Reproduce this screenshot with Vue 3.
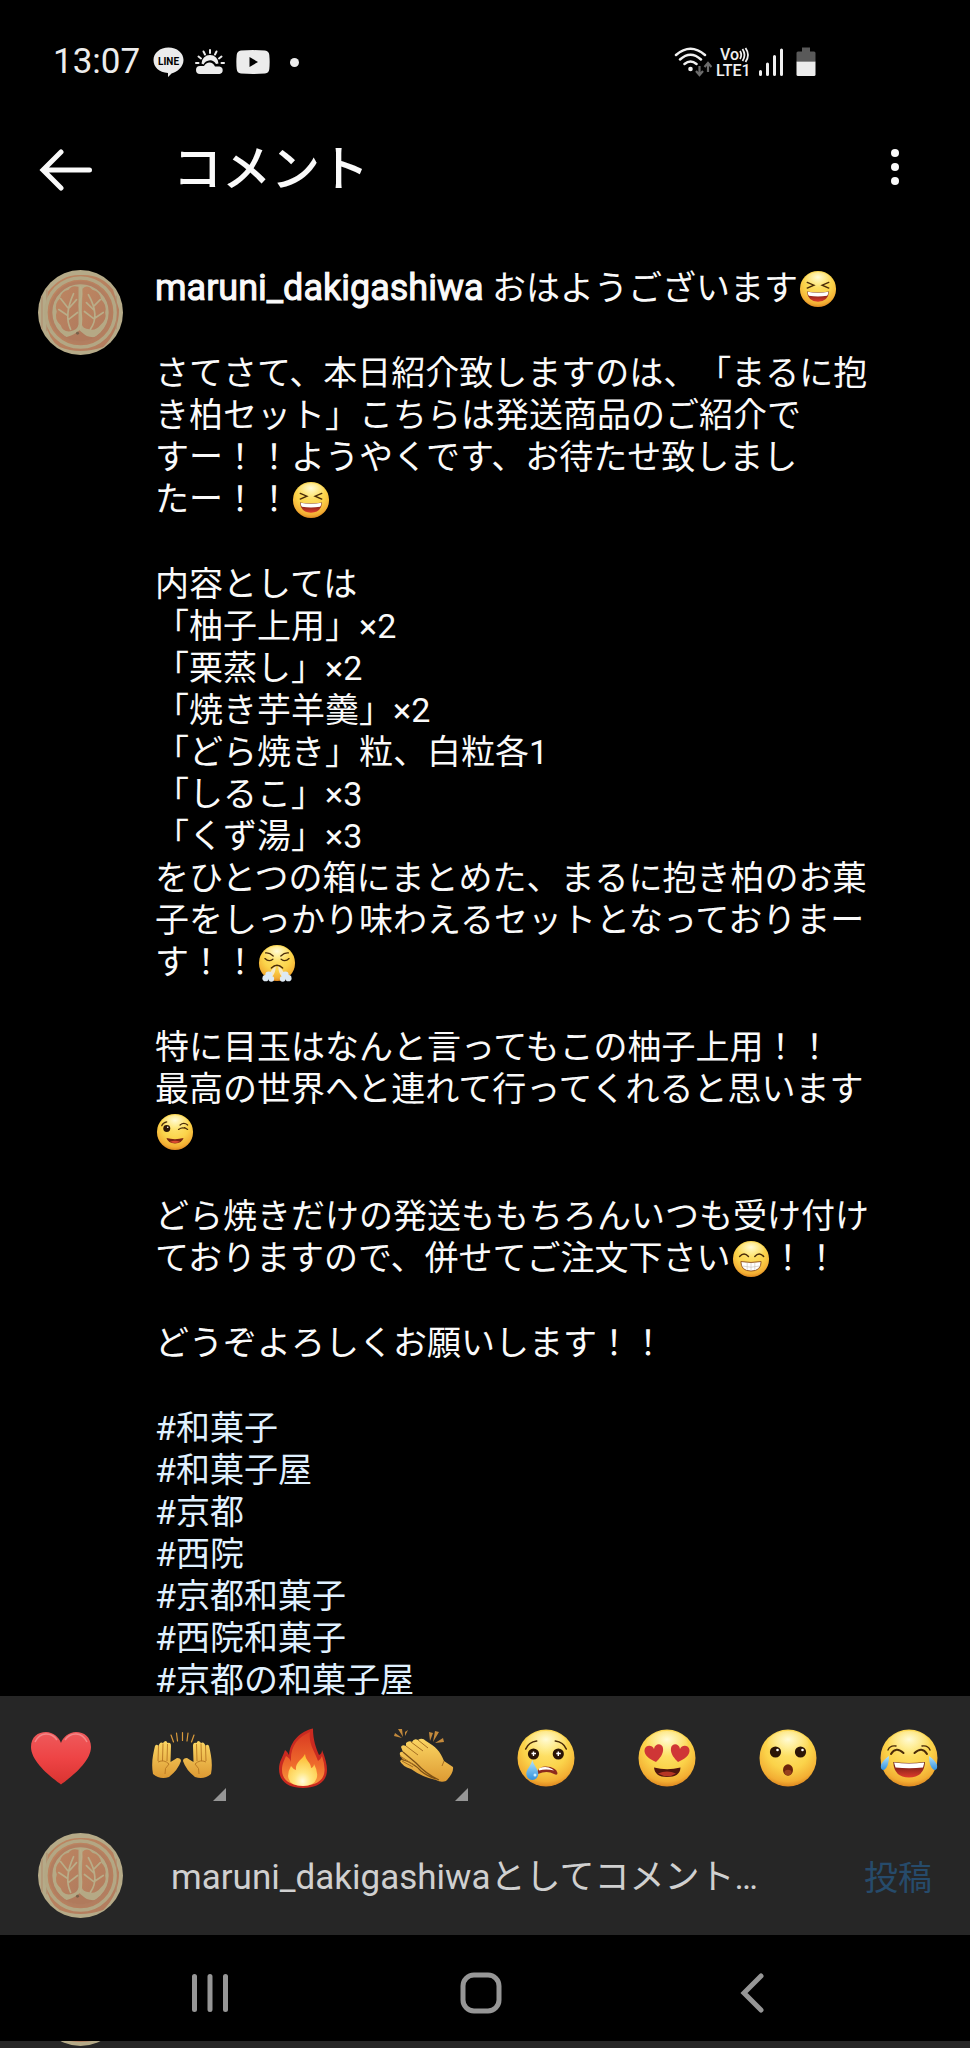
<script setup>
import { ref } from 'vue';

const user = 'maruni_dakigashiwa';
const comment = ref('');

const emojiIds = {
    '😆': 'laugh',
    '😤': 'triumph',
    '😉': 'wink',
    '😁': 'grin',
};

// each paragraph is a list of lines
const paragraphs = [
    ['さてさて、本日紹介致しますのは、「まるに抱き柏セット」こちらは発送商品のご紹介ですー！！ようやくです、お待たせ致しましたー！！😆'],
    [
        '内容としては',
        '「柚子上用」×2',
        '「栗蒸し」×2',
        '「焼き芋羊羹」×2',
        '「どら焼き」粒、白粒各1',
        '「しるこ」×3',
        '「くず湯」×3',
        'をひとつの箱にまとめた、まるに抱き柏のお菓子をしっかり味わえるセットとなっておりまーす！！😤',
    ],
    [
        '特に目玉はなんと言ってもこの柚子上用！！',
        '最高の世界へと連れて行ってくれると思います😉',
    ],
    ['どら焼きだけの発送ももちろんいつも受け付けておりますので、併せてご注文下さい😁！！'],
    ['どうぞよろしくお願いします！！'],
];

const hashtags = ['#和菓子', '#和菓子屋', '#京都', '#西院', '#京都和菓子', '#西院和菓子', '#京都の和菓子屋'];

const reactions = [
    { id: 'heart', char: '❤️' },
    { id: 'hands', char: '🙌', more: true },
    { id: 'fire', char: '🔥' },
    { id: 'clap', char: '👏', more: true },
    { id: 'cry', char: '😢' },
    { id: 'love', char: '😍' },
    { id: 'wow', char: '😮' },
    { id: 'joy', char: '😂' },
];

// split a line into text and emoji pieces
const pieces = (line) => line.split(/(😆|😤|😉|😁)/u).filter(Boolean);

const addEmoji = (char) => {
    comment.value += char;
};
</script>

<template>
    <!-- shared drawings -->
    <svg class="sprite" aria-hidden="true">
        <defs>
            <radialGradient id="g-face" cx="0.5" cy="0.3" r="0.72">
                <stop offset="0" stop-color="#ffe777" />
                <stop offset="0.55" stop-color="#fbd34a" />
                <stop offset="0.85" stop-color="#f3ae33" />
                <stop offset="1" stop-color="#d97f1c" />
            </radialGradient>
            <radialGradient id="g-shine" cx="0.5" cy="0.3" r="0.6">
                <stop offset="0" stop-color="#fffbd8" />
                <stop offset="1" stop-color="#fff3a0" stop-opacity="0" />
            </radialGradient>
            <linearGradient id="g-heart" x1="0" y1="0" x2="0" y2="1">
                <stop offset="0" stop-color="#ee5a5c" />
                <stop offset="0.5" stop-color="#ee4445" />
                <stop offset="1" stop-color="#d93330" />
            </linearGradient>
            <linearGradient id="g-tear" x1="0" y1="0" x2="0" y2="1">
                <stop offset="0" stop-color="#b6e6fb" />
                <stop offset="1" stop-color="#3191de" />
            </linearGradient>
            <linearGradient id="g-hand" x1="0" y1="0" x2="0" y2="1">
                <stop offset="0" stop-color="#fbd663" />
                <stop offset="1" stop-color="#dd9a33" />
            </linearGradient>
            <linearGradient id="g-fire" x1="0" y1="0" x2="0" y2="1">
                <stop offset="0" stop-color="#d93a22" />
                <stop offset="0.6" stop-color="#ee6a2c" />
                <stop offset="1" stop-color="#f99a3e" />
            </linearGradient>
            <radialGradient id="g-flame" cx="0.5" cy="0.85" r="0.8">
                <stop offset="0" stop-color="#fffbe0" />
                <stop offset="0.35" stop-color="#ffe680" />
                <stop offset="1" stop-color="#fdbb30" />
            </radialGradient>
            <linearGradient id="g-mouth" x1="0" y1="0" x2="0" y2="1">
                <stop offset="0" stop-color="#5b1710" />
                <stop offset="1" stop-color="#df3b2c" />
            </linearGradient>
            <linearGradient id="g-clay" x1="0" y1="0" x2="1" y2="1">
                <stop offset="0" stop-color="#bd8661" />
                <stop offset="1" stop-color="#b27c5e" />
            </linearGradient>
            <clipPath id="c-avatar"><circle cx="43" cy="43" r="43" /></clipPath>
        </defs>

        <symbol id="face" viewBox="0 0 60 60">
            <circle cx="30" cy="30" r="28.5" fill="url(#g-face)" />
            <ellipse cx="30" cy="17" rx="21" ry="14" fill="url(#g-shine)" />
        </symbol>

        <symbol id="laugh" viewBox="0 0 60 60">
            <use href="#face" />
            <path d="M13 19.500l10.500 4.500-10.500 4.500M47 19.500l-10.500 4.500 10.500 4.500" fill="none" stroke="#4a2b08" stroke-width="2.200" stroke-linecap="round" />
            <path d="M12.500 34Q30 37 47.500 34Q46 50 30 50Q14 50 12.500 34z" fill="url(#g-mouth)" />
            <path d="M13.500 34.500Q30 37.500 46.500 34.500Q46.500 38 44.500 40.500Q30 43 15.500 40.500Q13.500 38 13.500 34.500z" fill="#fff" />
        </symbol>

        <symbol id="triumph" viewBox="0 0 60 60">
            <use href="#face" />
            <path d="M12 14q6-1 12 5M48 14q-6-1-12 5M11 23q6 6 12.500 1M49 23q-6 6-12.500 1M21 38q9-9 18 0" fill="none" stroke="#4a2b08" stroke-width="2" stroke-linecap="round" />
            <path d="M28 35q-8 5-10 14l5 2q5-7 5-16zM32 35q8 5 10 14l-5 2q-5-7-5-16z" fill="#f7e9c5" />
            <g fill="#dde9f3">
                <circle cx="12" cy="54" r="5" /><circle cx="17" cy="49" r="5.500" /><circle cx="21" cy="55" r="4.500" />
                <circle cx="48" cy="54" r="5" /><circle cx="43" cy="49" r="5.500" /><circle cx="39" cy="55" r="4.500" />
            </g>
        </symbol>

        <symbol id="wink" viewBox="0 0 60 60">
            <use href="#face" />
            <circle cx="17" cy="24.500" r="5.500" fill="#2b1506" />
            <circle cx="18.500" cy="22.500" r="1.300" fill="#fff" />
            <path d="M9 20q2-5 8-6M35.500 26q7-5 14.500 0M38 19q6-5 12 0M50 26l-5-3" fill="none" stroke="#4a2b08" stroke-width="1.800" stroke-linecap="round" />
            <path d="M16.500 39.500Q30 43 43.500 39.500Q41 48 30 48Q19 48 16.500 39.500z" fill="#7c2412" />
            <path d="M22 45.500q8-3 16 0q-8 4-16 0z" fill="#dc4a31" />
        </symbol>

        <symbol id="grin" viewBox="0 0 60 60">
            <use href="#face" />
            <path d="M12 26q7-8 14 0M36 26q7-8 14 0" fill="none" stroke="#4a2b08" stroke-width="2.200" stroke-linecap="round" />
            <path d="M14 34Q30 37 46 34Q46 49 30 49Q14 49 14 34z" fill="#fff" stroke="#8b4a18" stroke-width="1.400" />
            <path d="M16 41q14 4 28 0M24 36v11M30 36v12M36 36v11" fill="none" stroke="#c9c2b4" stroke-width="1" />
        </symbol>

        <symbol id="heart" viewBox="0 0 60 60">
            <path d="M30 56.500C24 52 0 35 0 19C0 9 7 4 15 4C22 4 28 9 30 15C32 9 38 4 45 4C53 4 60 9 60 19C60 35 36 52 30 56.500z" fill="url(#g-heart)" />
            <path d="M4 14q4-8 11-8t11 6M34 12q4-6 11-6t11 8" fill="none" stroke="#f79a9a" stroke-width="1.500" opacity="0.7" />
        </symbol>

        <symbol id="hands" viewBox="0 0 60 60">
            <g id="hand-left">
                <path d="M1 46C-1 36 1 26 3 18q1.500-2.500 3.500 0Q8 13 11 15Q14 11 15.500 15Q19 14 19 18L18.500 34Q22 32 25 30q4 0 4 3Q26 42 17 49Q8 52 1 46z" fill="url(#g-hand)" />
                <path d="M6.500 18L6 33M11 15.500L10.500 33M15.500 16L15 33M6 34q6-3 11 2M17 36q-5 4-4 10" fill="none" stroke="#b57521" stroke-width="0.900" />
            </g>
            <use href="#hand-left" transform="matrix(-1 0 0 1 60 0)" />
            <path d="M19 7l2.500 7M24.500 5l1 8M30.500 4.500v8M36 5l-1 8M42 7l-2.500 7" stroke="#d99a3b" stroke-width="1.200" stroke-linecap="round" />
        </symbol>

        <symbol id="fire" viewBox="0 0 60 60">
            <path d="M40 0.500C40 12 43 20 46 27Q49 26 49 22Q54 34 54 42C54 54 44 60 30 60C15 60 6 53 6 41C6 33 10 29 12 22Q15 24 16 27C17 13 28 3 40 0.500z" fill="#c92a20" />
            <path d="M37 4C35 15 42 24 45 33Q48 31 49 28Q52 37 51.500 43C51 53 42 57.500 30 57.500C17 57.500 9 52 9 42C9 36 11 33 13 28Q17 30 18 34C17 18 25 9 37 4z" fill="url(#g-fire)" />
            <path d="M32 26C33 34 38 34 38 40Q41 39 41 36Q45 43 44 49Q42 58 30 58Q16 58 15 48Q15 43 18 38Q20 41 23 42C22 34 29 32 32 26z" fill="url(#g-flame)" />
        </symbol>

        <symbol id="clap" viewBox="0 0 60 60">
            <path d="M6 33Q8 31 10 33L6 27Q5 23 9 24L7 19Q8 16 12 18L12 15Q15 12 18 14Q20 10 24 12Q28 9 32 13C42 19 46 23 50 33L59 39Q60 45 52 53Q47 55 42 52Q28 49 17 41Q8 38 6 33z" fill="url(#g-hand)" />
            <path d="M9 24l13 11q10 11 23 17M7 31q13 4 20 12 6 5 15 8" fill="none" stroke="#7d5116" stroke-width="1.300" />
            <path d="M12 18l12 9M17 14l12 9M24 12l10 8M6 28l14 9M8 33l11 6M50 33l-2 5" fill="none" stroke="#a66f22" stroke-width="1" />
            <path d="M0 8l8 2-7-5zM4 1l5 8-1-8zM11 8l3-6-3 2zM36 13l-1-9 4 1zM39 14l6-10-4-1zM41 15l9-1-1-4z" fill="#c48a3c" />
        </symbol>

        <symbol id="cry" viewBox="0 0 60 60">
            <use href="#face" />
            <path d="M9.700 21q3-7 11-8M50.300 21q-3-7-11-8" fill="none" stroke="#4a2b08" stroke-width="1.600" stroke-linecap="round" />
            <circle cx="17.500" cy="26" r="5.600" fill="#2b1506" />
            <circle cx="42.300" cy="26" r="5.600" fill="#2b1506" />
            <path d="M17.500 23.500v4.500M15.500 25.500h4.500M42.300 23.500v4.500M40.300 25.500h4.500" stroke="#fff" stroke-width="1.400" />
            <path d="M21 44Q24 38 30 38.500Q40 39 41.500 45Q41.500 48 38 46Q31 42 22 46z" fill="#8d2a1d" />
            <path d="M23 40.500q7-3 13 0.500l2 1.500q-8-2-15 0z" fill="#fff" />
            <path d="M16.300 32C18 38 22.300 41 22.300 46A6 6 0 0 1 10.300 46C10.300 41 15 38 16.300 32z" fill="url(#g-tear)" />
            <circle cx="19" cy="47" r="1.500" fill="#c9ecff" />
        </symbol>

        <symbol id="love" viewBox="0 0 60 60">
            <use href="#face" />
            <path d="M19 34C12 31 7 27 7.500 22C8 17 15 16 17 21C18 15 25 15 26 20C27 26 22 31 19 34z" fill="#cf3636" />
            <path d="M41 34C48 31 53 27 52.500 22C52 17 45 16 43 21C42 15 35 15 34 20C33 26 38 31 41 34z" fill="#cf3636" />
            <path d="M17 39.500Q30 43 43.500 39.500Q43 49 30 49Q18 49 17 39.500z" fill="#52160e" />
            <path d="M21 45.500q9-4 18 0q-8 5.500-18 0z" fill="#b63524" />
        </symbol>

        <symbol id="wow" viewBox="0 0 60 60">
            <use href="#face" />
            <circle cx="17.500" cy="24" r="5.600" fill="#2b1506" />
            <circle cx="42.500" cy="24" r="5.600" fill="#2b1506" />
            <circle cx="19.500" cy="22" r="1.300" fill="#fff" />
            <circle cx="44.500" cy="22" r="1.300" fill="#fff" />
            <ellipse cx="30" cy="42" rx="5" ry="5.800" fill="#6b240c" />
            <ellipse cx="30" cy="44.500" rx="3.500" ry="2.800" fill="#98401c" />
        </symbol>

        <symbol id="joy" viewBox="0 0 60 60">
            <use href="#face" />
            <path d="M12 26q5-8 12.500-1M48 26q-5-8-12.500-1" fill="none" stroke="#4a2b08" stroke-width="2" stroke-linecap="round" />
            <path d="M9 22q2-5 8-4M51 22q-2-5-8-4" fill="none" stroke="#4a2b08" stroke-width="1.400" stroke-linecap="round" />
            <path d="M14.300 34Q30 36 46 34Q45 49.500 30 49.500Q15 49.500 14.300 34z" fill="url(#g-mouth)" />
            <path d="M15 34.500Q30 36.500 45.300 34.500L44 39.500Q30 41 16.500 39.500z" fill="#fff" />
            <path d="M10 28Q10 39 5 42Q1 42 2 37Q4 32 10 28zM50 28Q50 39 55 42Q59 42 58 37Q56 32 50 28z" fill="url(#g-tear)" />
        </symbol>

        <symbol id="avatar" viewBox="0 0 86 86">
            <g clip-path="url(#c-avatar)">
                <rect width="86" height="86" fill="#b5aa88" />
                <path d="M10 22Q24 4 44 5Q64 4 76 20L82 40Q82 62 66 78Q42 86 22 78Q10 70 8 52z" fill="url(#g-clay)" />
                <path d="M9 20v42M4 26v34M79 26v34" stroke="#b08a6c" stroke-width="1" />
                <circle cx="43" cy="43" r="35" fill="none" stroke="#b3a784" stroke-width="3.500" />
                <circle cx="43" cy="43" r="29" fill="#b5a985" />
                <circle cx="43" cy="43" r="30" fill="none" stroke="#b27e60" stroke-width="3" />
                <path d="M41 17Q34 15 31 20Q24 21 22 29Q16 34 19 42Q16 50 23 56Q25 63 33 62Q40 61 41 55z" fill="url(#g-clay)" />
                <path d="M45 19Q50 14 55 20Q63 22 64 30Q70 35 68 43Q70 50 63 56Q58 62 52 60Q45 60 44 54z" fill="url(#g-clay)" />
                <path d="M43 17q2 8 0 13t0 12 0 17M33 60Q26 46 36 24M30 46l-9-6M30 38l-7-9M31 50l9-7M32 38l7-8M53 60Q63 46 51 25M56 49l-9-7M57 41l-8-8M57 49l9-6M56 37l7-7" fill="none" stroke="#b9ad88" stroke-width="1.700" stroke-linecap="round" />
                <path d="M28 68q7-1 14-7 7 8 16 7-7 4-15 4t-15-4zM34 66l9-4 5 4z" fill="#b07a5c" />
                <circle cx="40" cy="64" r="1.500" fill="#796049" />
            </g>
        </symbol>
    </svg>

    <div class="screen" lang="ja">
        <div class="status-bar">
            <span class="time">13:07</span>
            <div class="status-left">
                <svg width="31" height="31" viewBox="0 0 31 31" role="img" aria-label="LINE">
                    <path d="M15.500 0.500C24 0.500 30.500 6 30.500 13C30.500 20 24 25 18.500 26.500L15 30V26C6 25.500 0.500 20 0.500 13C0.500 6 7 0.500 15.500 0.500z" fill="#ececec" />
                    <text class="line-text" x="15.500" y="17.500" text-anchor="middle">LINE</text>
                </svg>
                <svg width="30" height="26" viewBox="0 0 30 26" aria-hidden="true">
                    <path d="M15 1v3M8.500 2.500l1.500 3M21.500 2.500l-1.500 3M3.500 7.500l2.500 2M26.500 7.500l-2.500 2M1 14h2.500M26.500 14h2.500" stroke="#ececec" stroke-width="2" stroke-linecap="round" />
                    <path d="M6.500 14.500A8.500 8.500 0 0 1 23.500 14.500L21 15Q18 10.500 14 11.500Q10 12 8.500 15.500z" fill="#ececec" />
                    <path d="M5 25a4 4 0 0 1 0-8H9Q11 13.500 14.500 13.500T20 17.500H24.500a3.800 3.800 0 0 1 0 7.500z" fill="#ececec" />
                </svg>
                <svg width="34" height="24" viewBox="0 0 34 24" aria-hidden="true">
                    <path d="M5 0.500Q17-0.300 29 0.500Q33 1 33.300 5Q34 12 33.300 19Q33 23 29 23.500Q17 24.300 5 23.500Q1 23 0.700 19Q0 12 0.700 5Q1 1 5 0.500z" fill="#ececec" />
                    <path d="M13.500 7v10l8.500-5z" fill="#000" />
                </svg>
                <span class="dot"></span>
            </div>
            <div class="status-right">
                <svg width="38" height="30" viewBox="0 0 38 30" aria-hidden="true">
                    <path d="M2 8Q16.500-4.500 31 8M6 12.500Q16.500 3 27 12.500M10.500 17Q16.500 12 22.500 17" fill="none" stroke="#f0f0f0" stroke-width="2.500" stroke-linecap="round" />
                    <circle cx="16.500" cy="22" r="2.300" fill="#f0f0f0" />
                    <path d="M25.500 19v8M22 24l3.500 4 3.500-4M34 25v-8M30.500 20l3.500-4 3.500 4" fill="none" stroke="#6c6c6c" stroke-width="2.200" />
                </svg>
                <svg width="38" height="40" viewBox="0 0 38 40" role="img" aria-label="VoLTE">
                    <text class="volte" x="4" y="18">Vo</text>
                    <path d="M24 9q2.500 4 0 8M26.500 7q4 6 0 12M29.500 6q5 7 0 14" fill="none" stroke="#f0f0f0" stroke-width="1.800" />
                    <text class="volte" x="0" y="34">LTE1</text>
                </svg>
                <svg width="26" height="28" viewBox="0 0 26 28" aria-hidden="true">
                    <path d="M2.500 23.500v3M9.500 16v10.500M16.500 8.500v18M23.500 2v24.500" stroke="#f0f0f0" stroke-width="3" stroke-linecap="round" />
                </svg>
                <svg width="20" height="30" viewBox="0 0 20 30" aria-hidden="true">
                    <path d="M6 0.500h8v4h4q1.500 0 1.500 1.500v8.500h-19v-8.500q0-1.500 1.500-1.500h4z" fill="#595959" />
                    <path d="M0.500 14.500h19v13q0 1.500-1.500 1.500h-16q-1.500 0-1.500-1.500z" fill="#ececec" />
                </svg>
            </div>
        </div>

        <header class="header">
            <button class="icon-btn back" type="button" aria-label="戻る">
                <svg width="54" height="42" viewBox="0 0 54 42">
                    <path d="M22 3L4 21l18 18M4.500 21h46" fill="none" stroke="#fafafa" stroke-width="5" stroke-linecap="round" />
                </svg>
            </button>
            <h1>コメント</h1>
            <button class="icon-btn" type="button" aria-label="その他">
                <svg width="8" height="42" viewBox="0 0 8 42">
                    <g fill="#fafafa"><circle cx="4" cy="4" r="4" /><circle cx="4" cy="18" r="4" /><circle cx="4" cy="32" r="4" /></g>
                </svg>
            </button>
        </header>

        <main class="comments">
            <article class="comment">
                <svg class="avatar" role="img" :aria-label="user"><use href="#avatar" /></svg>
                <div class="comment-text">
                    <p>
                        <a class="username" href="#">{{ user }}</a>
                        おはようございます<svg class="emoji" role="img" aria-label="😆"><use href="#laugh" /></svg>
                    </p>
                    <div v-for="(lines, i) in paragraphs" :key="i">
                        <p v-for="line in lines" :key="line">
                            <template v-for="(piece, n) in pieces(line)" :key="n">
                                <svg v-if="emojiIds[piece]" class="emoji" role="img" :aria-label="piece"><use :href="'#' + emojiIds[piece]" /></svg>
                                <template v-else>{{ piece }}</template>
                            </template>
                        </p>
                    </div>
                    <div>
                        <p v-for="tag in hashtags" :key="tag"><a class="tag" href="#">{{ tag }}</a></p>
                    </div>
                </div>
            </article>
        </main>

        <footer class="footer">
            <div class="reactions">
                <button v-for="r in reactions" :key="r.id" class="reaction" type="button" :aria-label="r.char" @click="addEmoji(r.char)">
                    <svg class="reaction-icon"><use :href="'#' + r.id" /></svg>
                    <span v-if="r.more" class="more"></span>
                </button>
            </div>
            <form class="composer" @submit.prevent>
                <svg class="avatar" aria-hidden="true"><use href="#avatar" /></svg>
                <input v-model="comment" type="text" aria-label="コメントを入力" :placeholder="user + 'としてコメント…'">
                <button class="post" type="submit">投稿</button>
            </form>
        </footer>

        <nav class="nav-bar">
            <button class="icon-btn" type="button" aria-label="履歴">
                <svg width="38" height="40" viewBox="0 0 38 40">
                    <path d="M3.500 3.500v33M19 3.500v33M34.500 3.500v33" stroke="#969696" stroke-width="5" stroke-linecap="round" />
                </svg>
            </button>
            <button class="icon-btn" type="button" aria-label="ホーム">
                <svg width="42" height="42" viewBox="0 0 42 42">
                    <rect x="3" y="3" width="36" height="36" rx="11" fill="none" stroke="#969696" stroke-width="5" />
                </svg>
            </button>
            <button class="icon-btn" type="button" aria-label="戻る">
                <svg width="24" height="40" viewBox="0 0 24 40">
                    <path d="M21 3L4 20l17 17" fill="none" stroke="#969696" stroke-width="5" stroke-linecap="round" />
                </svg>
            </button>
        </nav>
        <div class="edge">
            <svg class="avatar" aria-hidden="true"><use href="#avatar" /></svg>
        </div>
    </div>
</template>

<style>
body {
    background: #000;
}
</style>

<style scoped>
.screen {
    display: flex;
    flex-direction: column;
    height: 100vh;
    background: #000;
    color: #fafafa;
    font-family: Roboto, "Noto Sans CJK JP", sans-serif;
    font-size: 34px;
    line-height: 42px;
    overflow: hidden;
}
.sprite { position: absolute; width: 0; height: 0; }
button { padding: 0; border: none; background: none; font: inherit; color: inherit; cursor: pointer; }
a { color: inherit; text-decoration: none; }
p { margin: 0; }
svg { display: block; flex-shrink: 0; }

.status-bar {
    display: flex;
    align-items: center;
    height: 124px;
    padding: 0 154px 0 53px;
    flex-shrink: 0;
}
.time { color: #ececec; font-size: 35px; margin-right: 13px; }
.status-left { display: flex; align-items: center; gap: 11px; }
.line-text { font: bold 10px Roboto, sans-serif; fill: #000; }
.dot { width: 9px; height: 9px; margin-left: 9px; border-radius: 50%; background: #ececec; }
.status-right { display: flex; align-items: center; gap: 4px; margin-left: auto; }
.status-right svg:last-child { margin-left: 8px; }
.volte { font: 500 16px Roboto, sans-serif; fill: #f0f0f0; }

.header {
    display: flex;
    align-items: center;
    height: 92px;
    padding: 0 71px 0 39px;
    flex-shrink: 0;
}
.header h1 { flex: 1; margin: 0; font-size: 49px; font-weight: 500; line-height: 60px; }
.icon-btn { display: flex; align-items: center; justify-content: center; }
.back { margin-right: 80px; }

.comments { flex: 1; min-height: 0; overflow: hidden; }
.comment { display: flex; gap: 32px; padding: 51px 90px 0 38px; }
.avatar { width: 85px; height: 85px; }
.comment .avatar { margin-top: 3px; }
.comment-text {
    display: flex;
    flex-direction: column;
    flex: 1;
    gap: 43px;
    line-break: strict;
    text-spacing-trim: space-all;
}
.username { font-size: 36px; -webkit-text-stroke: 1px #fafafa; }
.emoji {
    display: inline-block;
    width: 38px;
    height: 38px;
    margin: -10px 1px -6px;
    vertical-align: middle;
}
.tag { color: #e0f1ff; }

.footer { flex-shrink: 0; background: #262626; }
.reactions { display: grid; grid-template-columns: repeat(8, 1fr); height: 124px; }
.reaction { position: relative; display: flex; align-items: center; justify-content: center; }
.reaction-icon { width: 60px; height: 60px; overflow: visible; }
.more {
    position: absolute;
    right: 17px;
    bottom: 19px;
    border-left: 13px solid transparent;
    border-bottom: 13px solid #969696;
}
.composer { display: flex; align-items: center; height: 110px; padding: 0 38px 5px; }
.composer input {
    flex: 1;
    min-width: 0;
    margin-left: 48px;
    padding: 5px 0 0;
    border: none;
    outline: none;
    background: none;
    color: #fafafa;
    font: inherit;
    font-size: 35px;
}
.composer input::placeholder { color: #d0d0d0; opacity: 1; }
.post { padding-top: 5px; color: #264b6b; }

.nav-bar {
    display: grid;
    grid-template-columns: repeat(3, 1fr);
    height: 96px;
    padding: 10px 82px 0 74px;
    flex-shrink: 0;
}
.edge {
    display: flex;
    align-items: flex-end;
    height: 7px;
    padding: 0 38px 2px;
    box-sizing: border-box;
    flex-shrink: 0;
    background: #262626;
    overflow: hidden;
}
</style>
